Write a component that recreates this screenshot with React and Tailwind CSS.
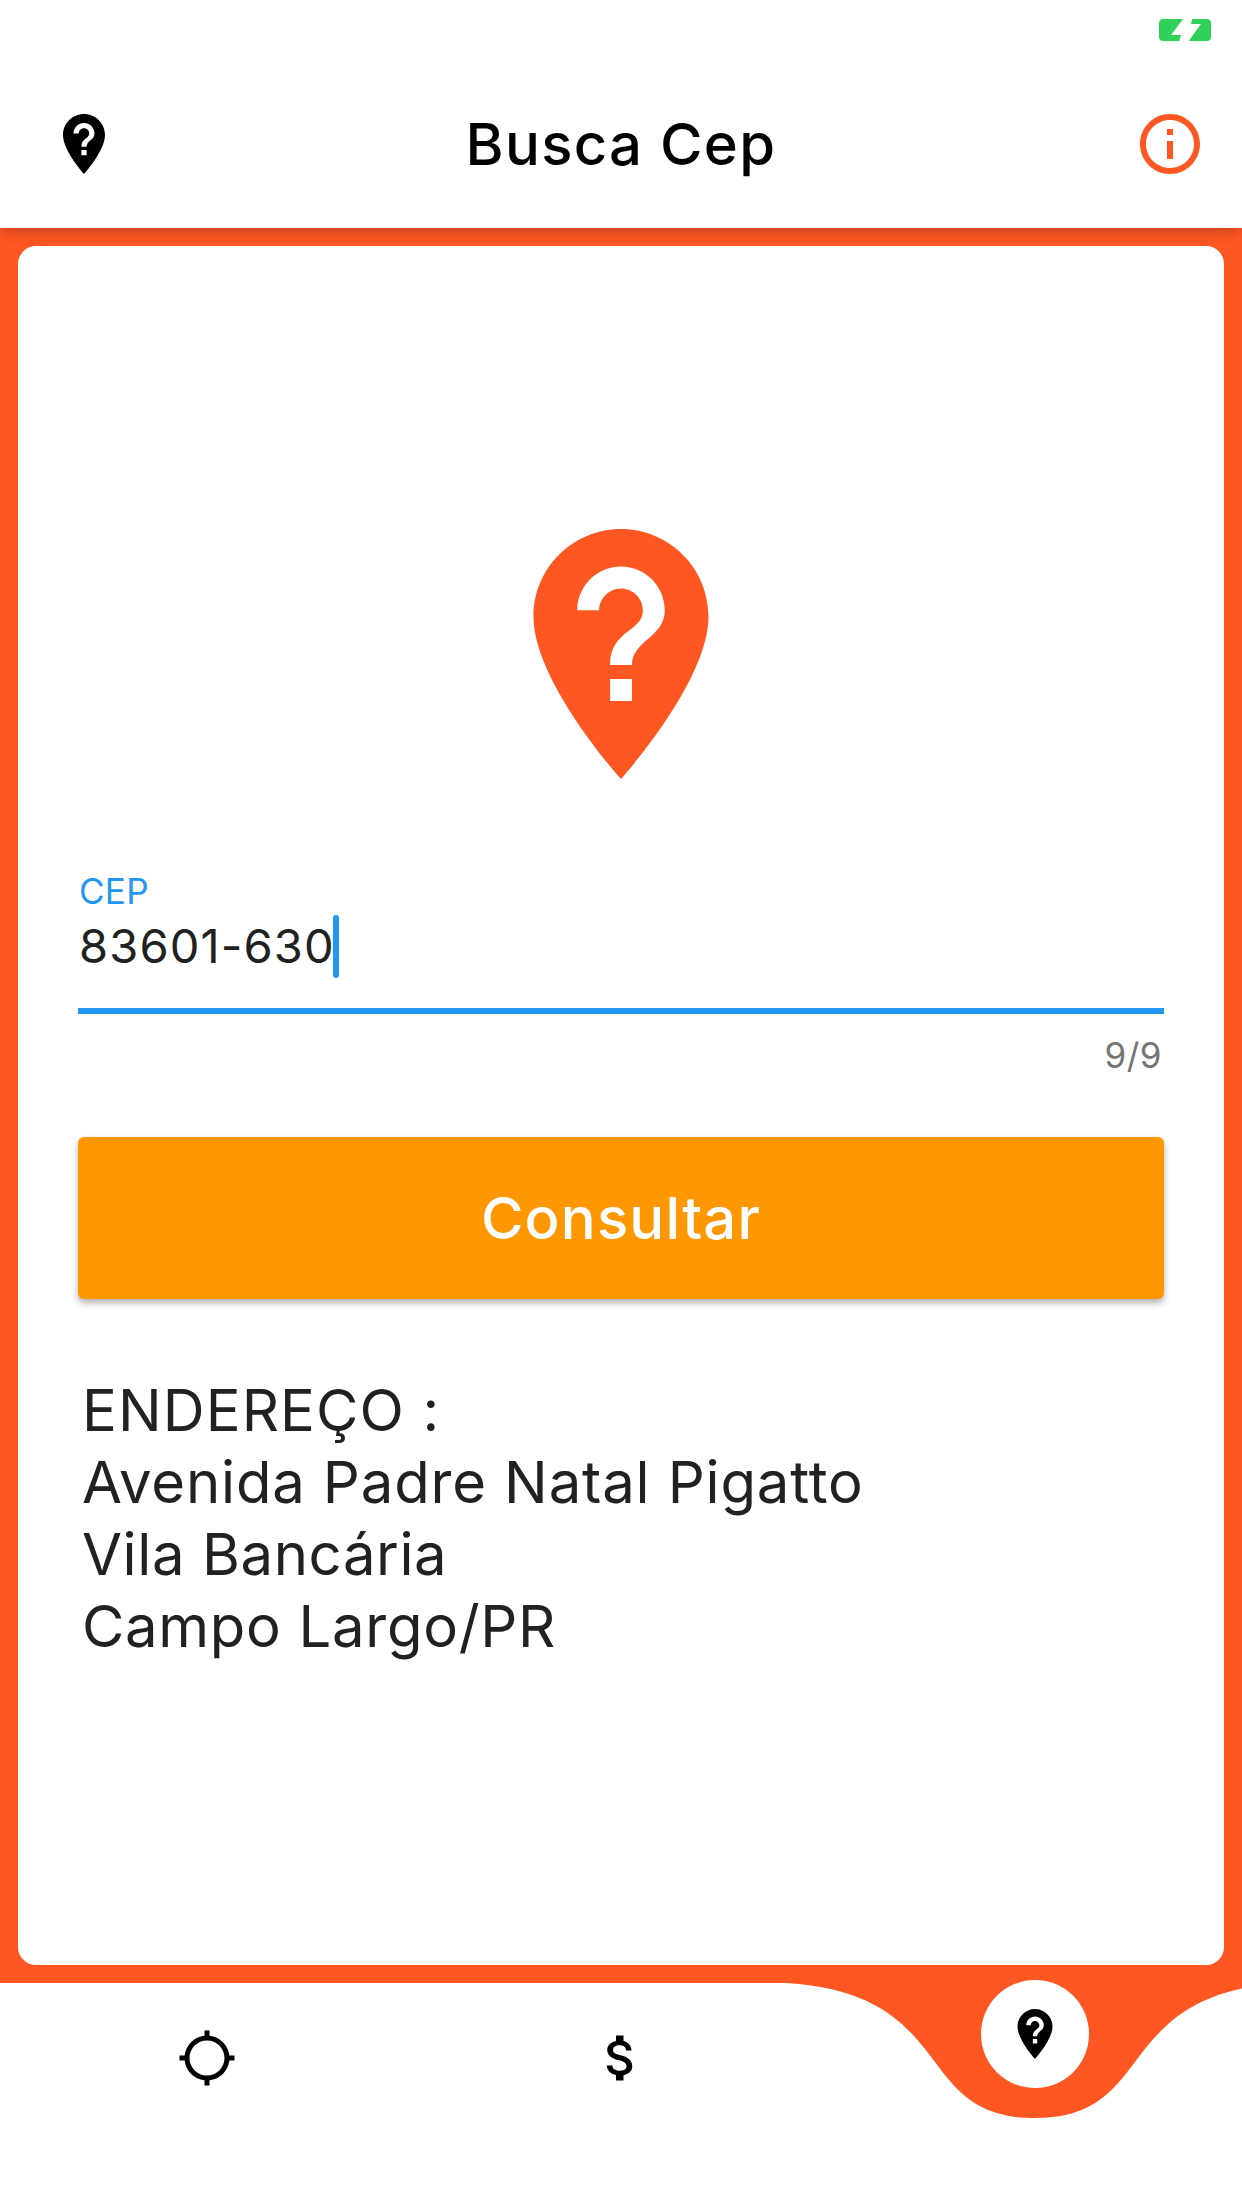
const PIN_PATH =
  "M12 2C8.14 2 5 5.14 5 9c0 5.25 7 13 7 13s7-7.75 7-13c0-3.86-3.14-7-7-7zm.88 13.75h-1.75V14h1.75v1.75zm0-2.87h-1.75c0-2.84 2.62-2.62 2.62-4.38 0-.96-.79-1.75-1.75-1.75s-1.75.79-1.75 1.75H8.5C8.5 6.57 10.07 5 12 5s3.5 1.57 3.5 3.5c0 2.19-2.62 2.41-2.62 4.38z";
const INFO_PATH =
  "M11 7h2v2h-2zm0 4h2v6h-2zm1-9C6.48 2 2 6.48 2 12s4.48 10 10 10 10-4.48 10-10S17.52 2 12 2zm0 18c-4.41 0-8-3.59-8-8s3.59-8 8-8 8 3.59 8 8-3.59 8-8 8z";
const LOCATION_PATH =
  "M20.94 11c-.46-4.17-3.77-7.48-7.94-7.94V1h-2v2.06C6.83 3.52 3.52 6.83 3.06 11H1v2h2.06c.46 4.17 3.77 7.48 7.94 7.94V23h2v-2.06c4.17-.46 7.48-3.77 7.94-7.94H23v-2h-2.06zM12 19c-3.87 0-7-3.13-7-7s3.13-7 7-7 7 3.13 7 7-3.13 7-7 7z";
const MONEY_PATH =
  "M11.8 10.9c-2.27-.59-3-1.2-3-2.15 0-1.09 1.01-1.85 2.7-1.85 1.78 0 2.44.85 2.5 2.1h2.21c-.07-1.72-1.12-3.3-3.21-3.81V3h-3v2.16c-1.94.42-3.5 1.68-3.5 3.61 0 2.31 1.91 3.46 4.7 4.13 2.5.6 3 1.48 3 2.41 0 .69-.49 1.79-2.7 1.79-2.06 0-2.87-.92-2.98-2.1h-2.2c.12 2.19 1.76 3.42 3.68 3.83V21h3v-2.15c1.95-.37 3.5-1.5 3.5-3.55 0-2.84-2.43-3.81-4.7-4.4z";

function Icon({ path, className }) {
  return (
    <svg viewBox="0 0 24 24" fill="currentColor" className={className}>
      <path d={path} />
    </svg>
  );
}

function StatusBar() {
  return (
    <div className="flex h-[60px] justify-end pt-[19px] pr-[31px]">
      {/* Charging battery */}
      <svg viewBox="0 0 52 22" className="h-[22px] w-[52px] text-[#30d158]" fill="currentColor">
        <path d="M4.5 0H24L12 16H22L20.3 22H4.5Q0 22 0 17.5V4.5Q0 0 4.5 0Z" />
        <path d="M33.3 0H47.5Q52 0 52 4.5V17.5Q52 22 47.5 22H29.7L42 5H32Z" />
      </svg>
    </div>
  );
}

function Header() {
  return (
    <header className="relative z-10 h-[228px] bg-white shadow-[0_6px_12px_-2px_rgba(0,0,0,0.23)]">
      <StatusBar />
      <div className="flex h-[168px] items-center justify-between pr-9 pl-12">
        <Icon path={PIN_PATH} className="size-[72px] text-black" />
        <h1 className="mr-3 text-[58px] leading-[72px] font-medium tracking-[1.3px] text-black">Busca Cep</h1>
        <button>
          <Icon path={INFO_PATH} className="size-[72px] text-[#ff5722]" />
        </button>
      </div>
    </header>
  );
}

function CepField() {
  return (
    <div className="mt-[66px]">
      <label className="block h-11 pl-px text-[35px] leading-[42px] tracking-[0.3px] text-[#2196f3]">CEP</label>
      <div className="flex h-[100px] items-start border-b-6 border-[#2196f3] pl-px">
        <span className="text-[47px] leading-[64px] tracking-[1.15px]">83601-630</span>
        <span className="mt-px -ml-0.5 h-[63px] w-1.5 rounded-full bg-[#2196f3]" />
      </div>
      <div className="mt-5 pr-0.5 text-right text-[35px] leading-[42px] tracking-[0.5px] text-[#757575]">9/9</div>
    </div>
  );
}

function BottomNav() {
  return (
    <nav className="relative h-[225px]">
      {/* White bar with the dip under the active tab */}
      <svg viewBox="0 0 1242 225" className="absolute inset-0 h-full w-full" fill="#ffffff">
        <path d="M0 0H786.6C960.5 11.25 910.8 135 1035 135C1159.2 135 1109.5 11.25 1283.4 0V225H0Z" />
      </svg>
      <ul className="relative grid grid-cols-3 grid-rows-[150px] items-center justify-items-center text-black">
        <li>
          <Icon path={LOCATION_PATH} className="size-[60px]" />
        </li>
        <li>
          <Icon path={MONEY_PATH} className="size-[60px]" />
        </li>
        <li className="mb-12 flex size-[108px] items-center justify-center rounded-full bg-white">
          <Icon path={PIN_PATH} className="size-[60px]" />
        </li>
      </ul>
    </nav>
  );
}

export default function App() {
  return (
    <div className="flex h-[2208px] w-[1242px] flex-col overflow-hidden bg-[#ff5722] font-['Inter',sans-serif] text-[#212121]">
      <Header />
      <main className="flex-1 p-[18px]">
        <div className="h-full rounded-[18px] bg-white px-[60px] pt-[258px]">
          <Icon path={PIN_PATH} className="mx-auto size-[300px] text-[#ff5722]" />
          <CepField />
          <button className="mt-[61px] block h-[162px] w-full rounded-md bg-[#ff9800] text-[58px] font-medium tracking-[1.2px] text-white shadow-[0_4px_7px_rgba(0,0,0,0.3)]">
            Consultar
          </button>
          <div className="mt-[75px] pl-1 text-[58px] leading-[72px]">
            <p className="tracking-[1.1px]">ENDEREÇO :</p>
            <p className="tracking-[0.85px]">Avenida Padre Natal Pigatto</p>
            <p className="tracking-[0.6px]">Vila Bancária</p>
            <p className="tracking-[0.7px]">Campo Largo/PR</p>
          </div>
        </div>
      </main>
      <BottomNav />
    </div>
  );
}
